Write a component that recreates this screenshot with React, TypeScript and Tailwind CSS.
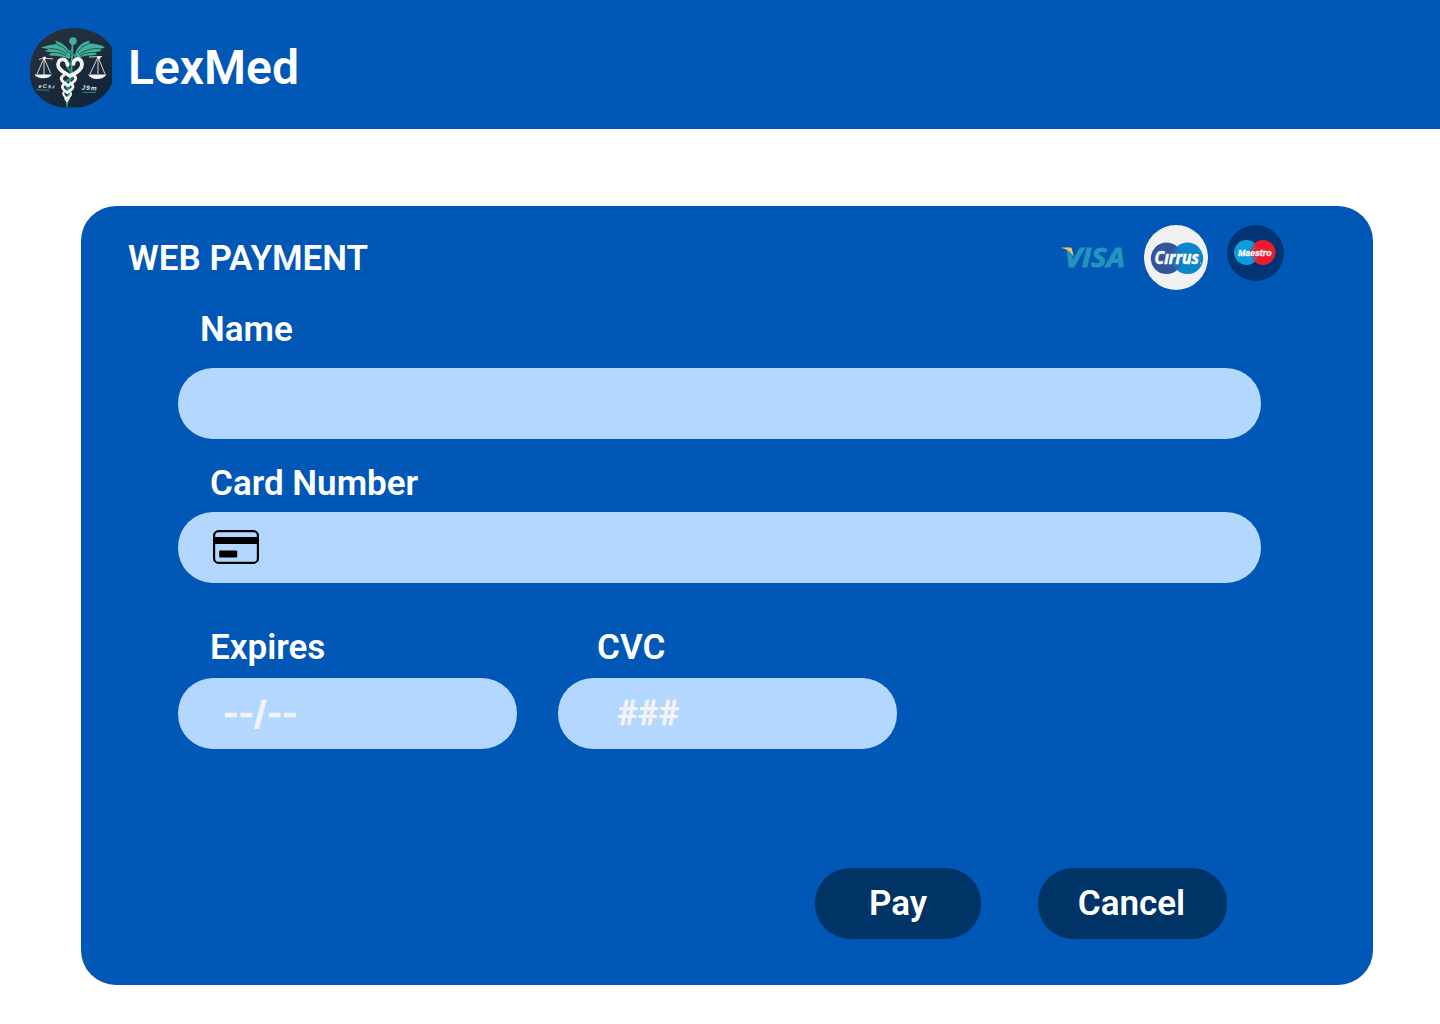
import React from "react";

const label = "text-[35px] leading-[42px] font-semibold text-white whitespace-nowrap";
const field = "rounded-[35px] bg-[#b3d7ff] h-[71px] flex items-center";

function LexMedLogo() {
  return (
    <svg className="block h-[80px] w-[82px]" viewBox="0 0 82 80" fill="none">
      <defs>
        <linearGradient id="disc" x1="0" y1="0" x2="0.6" y2="1">
          <stop offset="0" stopColor="#2b333e" />
          <stop offset="0.5" stopColor="#1e2c3b" />
          <stop offset="1" stopColor="#122639" />
        </linearGradient>
      </defs>
      <path
        d="M43 0C56 0 70 5 78 14C80 16 82 19 82 22V55C78 67 64 77 50 79.500H32C16 77 4 67 1 54C-0.500 48 0 35 2 28C8 11 25 0 43 0Z"
        fill="url(#disc)"
      />
      <g fill="#43b09a">
        <circle cx="43" cy="13" r="3.800" />
        <path d="M40.500 29C40 20 33 15 25 12.500C26 14 26 15 27 16C22 16.500 16 17.500 11 19.500C14 20.500 17 20.500 19 21C17.500 22 16 22.500 14.500 23C17.500 24 20 24 22 24C21 25 20 26 18.500 27C25 28.500 31 27.500 35 29.500C38 31 40 31 40.500 29Z" />
        <path d="M45 29C45.500 20 51 14 60 12.500C59.500 13.500 59 14.500 58.500 15.500C64 15.500 71 16.500 75 19.500C73 20.500 71 20.500 69 20.500C70 21.500 71 22 72 22.500C69 24 66.500 24 64.500 24C65.500 25 66 25.500 67 26.500C61 28 55 27 51 29C48 31 46 31 45 29Z" />
      </g>
      <g stroke="#1e2d3a" strokeWidth="0.700">
        <path d="M27 16.500C32 18 36 21 38 25M19 20.500C27 20.500 33 23 37 26.500M22 24.500C28 24 33 26 36 28" />
        <path d="M58.500 16C53 17.500 49 21 47.500 25M69 20.500C60 20.500 53 23 49 26.500M64.500 24.500C58 24 53 26 50 28" />
      </g>
      <path d="M42.500 15L41.500 42L37 76" stroke="#43b09a" strokeWidth="1.800" />
      <path
        d="M40 22C39 27 47 26 46.500 31C46 35 38 34 37.500 39C37.500 43 45 43 43 48C41 53 36 51 35 56C35 60 41 60 39 66"
        stroke="#2e8f80"
        strokeWidth="2.400"
      />
      <path
        d="M37.500 37C37 29.500 28.500 29.500 28 36.500C28 42.500 35 44.500 40 48C46 44.500 52.500 42 52 35.500C51 29.500 43.500 29.500 43.500 36"
        stroke="#f5f5f2"
        strokeWidth="3.700"
        strokeLinecap="round"
      />
      <g stroke="#f5f5f2" strokeLinecap="round" strokeLinejoin="round">
        <path d="M33.500 47.500C28 51 34 54.500 38 57.500C43 54.500 48.500 51 44 47.500" strokeWidth="3" />
        <path d="M33.500 56.500C30.500 60 34 62 37 64.500C41 62 45 60 42 56.500" strokeWidth="2.700" />
        <path d="M33.500 64.500C32.500 67 35 69 37 70.500C39.500 69 42 67 40.500 64.500" strokeWidth="2.200" />
        <path d="M35 70.500L37 73.500L39 70.500" strokeWidth="1.600" />
      </g>
      <path d="M36 75L37.500 79M38 75L36 79" stroke="#2e8f80" strokeWidth="1" />
      <g stroke="#e6e8e7" strokeWidth="0.900">
        <path d="M9 31.500L13 30L23 31M14 30L7 46M14 30L20.500 45M14 30V47" />
        <path d="M59 29L72 28.500M68 29L60 46M68 29L75 46M68 29V46" />
      </g>
      <g fill="#f5f5f2">
        <circle cx="14.500" cy="30" r="1.500" />
        <circle cx="69" cy="29.500" r="1.600" />
        <path d="M4.500 46.500H22C20 49.300 17 50.300 13 50.300C9 50.300 6 49 4.500 46.500Z" />
        <path d="M58 46.500H76.500C74.500 49.500 71 51 67 51C63 51 60 49.500 58 46.500Z" />
      </g>
      <g fill="#e8eaea" fontFamily="Liberation Sans" fontWeight="700" fontStyle="italic">
        <text x="8.500" y="60" fontSize="5.500" textLength="16" transform="rotate(1 8 60)">eCsɹ</text>
        <text x="51.500" y="61.800" fontSize="6.500" textLength="15" transform="rotate(2 51 61)">J9m</text>
      </g>
      <path d="M6.500 61.700L19 62.300M52.500 64.300H66" stroke="#2b9486" strokeWidth="0.900" />
    </svg>
  );
}

function Visa() {
  return (
    <svg className="mt-[22px] block h-[42px] w-[75px] -mr-[10px]" viewBox="0 -10 75 42">
      <text
        x="3.500"
        y="20.300"
        fill="#2394bc"
        stroke="#2394bc"
        strokeWidth="0.900"
        fontFamily="Open Sans"
        fontWeight="700"
        fontStyle="italic"
        fontSize="27.500"
        textLength="60.500"
        lengthAdjust="spacingAndGlyphs"
      >
        VISA
      </text>
      <path d="M0.500 0.600H8.300C10 0.600 10.700 1.300 11.100 2.800L12.800 10C10.500 5.500 6 2 0.500 1.100Z" fill="#fbc04f" />
    </svg>
  );
}

function Cirrus() {
  return (
    <svg className="mt-[10px] ml-[17px] block h-[65px] w-[65px]" viewBox="0 0 65 65">
      <ellipse cx="33" cy="32.500" rx="32" ry="32.500" fill="#f1f1f2" />
      <circle cx="23.500" cy="33.300" r="15.700" fill="#32559e" />
      <circle cx="44.500" cy="33.300" r="15.700" fill="#0a86c9" />
      <path d="M34 21.600A15.700 15.700 0 0 1 34 45A15.700 15.700 0 0 1 34 21.600Z" fill="#1f70b4" />
      <text
        x="11.500"
        y="38.900"
        fill="#fff"
        stroke="#fff"
        strokeWidth="0.500"
        fontFamily="Open Sans"
        fontWeight="700"
        fontStyle="italic"
        fontSize="17"
        textLength="44.500"
        lengthAdjust="spacingAndGlyphs"
      >
        Cırrus
      </text>
      <circle cx="57.500" cy="38" r="0.600" fill="#fff" />
    </svg>
  );
}

function Maestro() {
  return (
    <svg className="mt-[10px] ml-[19px] block h-[56px] w-[57px]" viewBox="0 0 57 56">
      <ellipse cx="28.500" cy="28" rx="28.400" ry="28" fill="#003473" />
      <circle cx="19.500" cy="27.500" r="12.500" fill="#0d9ddb" />
      <circle cx="36" cy="27.500" r="12.500" fill="#ec1c2e" />
      <path d="M25 21.500H29M24 23.500H29M24 32.500H30M25 34.500H30" stroke="#0d9ddb" strokeWidth="0.900" />
      <text
        x="11"
        y="30.800"
        fill="#fff"
        stroke="#fff"
        strokeWidth="0.300"
        fontFamily="Liberation Sans"
        fontWeight="700"
        fontStyle="italic"
        fontSize="9.500"
        textLength="33.500"
        lengthAdjust="spacingAndGlyphs"
      >
        Maestro
      </text>
    </svg>
  );
}

function CardIcon() {
  return (
    <svg className="ml-[35px] -mt-[2px] block h-[34px] w-[46px]" viewBox="0 0 46 34">
      <rect x="1.100" y="1.100" width="43.800" height="31.800" rx="4.500" fill="none" stroke="#000" strokeWidth="2.200" />
      <rect x="1" y="7" width="44" height="7" />
      <rect x="6.200" y="20.500" width="18" height="7" rx="0.800" />
    </svg>
  );
}

export default function App() {
  return (
    <div className="flex h-[1024px] w-[1440px] flex-col overflow-hidden bg-white font-['Roboto',sans-serif]">
      <header className="flex h-[129px] shrink-0 items-start bg-[#0057b5] pl-[30px] pt-[28px]">
        <LexMedLogo />
        <h1 className="ml-[16px] mt-[12px] text-[48px] leading-[56px] font-semibold text-white">LexMed</h1>
      </header>

      <main className="mt-[77px] ml-[81px] flex h-[779px] w-[1292px] flex-col rounded-[35px] bg-[#0057b5] pl-[97px]">
        <div className="flex h-[103px] items-start">
          <h2 className={`${label} mt-[32px] -ml-[50px] w-[933px]`}>WEB PAYMENT</h2>
          <div className="flex items-start pt-[9px]">
            <Visa />
            <Cirrus />
            <Maestro />
          </div>
        </div>

        <div className={`${label} pl-[22px]`}>Name</div>
        <div className={`${field} mt-[17px] w-[1083px]`} />

        <div className={`${label} mt-[24px] pl-[32px]`}>Card Number</div>
        <div className={`${field} mt-[7px] w-[1083px]`}>
          <CardIcon />
        </div>

        <div className="mt-[44px] flex gap-[41px]">
          <div className="w-[339px]">
            <div className={`${label} pl-[32px]`}>Expires</div>
            <div className={`${field} mt-[9px] pl-[45px] pb-[2px]`}>
              <span className="font-['Inter',sans-serif] text-[33px] leading-[42px] font-bold text-[#f3f3f3] [-webkit-text-stroke:0.7px_#f3f3f3]">--/--</span>
            </div>
          </div>
          <div className="w-[339px]">
            <div className={`${label} pl-[39px]`}>CVC</div>
            <div className={`${field} mt-[9px] pl-[59px]`}>
              <span className="text-[35px] leading-[42px] font-bold text-[#f3f3f3] [-webkit-text-stroke:0.4px_#f3f3f3]">###</span>
            </div>
          </div>
        </div>

        <div className="mt-[119px] ml-[637px] flex gap-[57px]">
          <button className={`${label} h-[71px] w-[166px] rounded-[35px] bg-[#003366]`}>Pay</button>
          <button className={`${label} h-[71px] w-[189px] rounded-[35px] bg-[#003366] pr-[2px]`}>Cancel</button>
        </div>
      </main>
    </div>
  );
}
